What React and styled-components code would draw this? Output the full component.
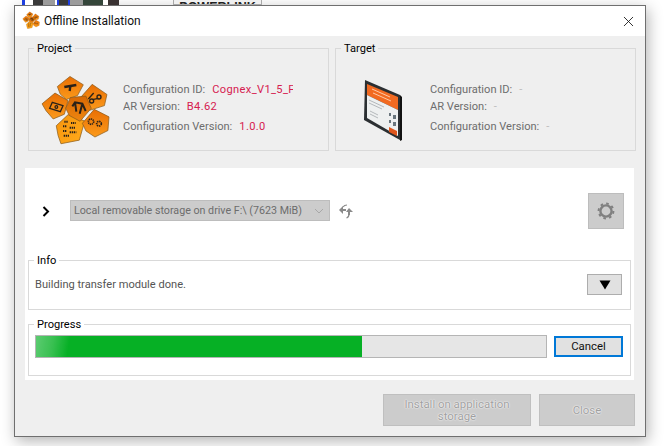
import React from 'react';
import styled, { createGlobalStyle } from 'styled-components';
import { X } from 'lucide-react';

const GlobalStyle = createGlobalStyle`
  html, body { margin: 0; padding: 0; background: #fff; }
  body { font-family: Roboto, "Open Sans", "Liberation Sans", sans-serif; font-size: 11.1px; color: #000; }
`;

const Desktop = styled.div`
  position: relative;
  width: 664px;
  height: 446px;
  overflow: hidden;
  background: #fff;
`;

const BehindStrip = styled.div`
  display: flex;
  height: 5px;
  padding-left: 22px;
  align-items: flex-start;
`;

const BehindTools = styled.div`
  width: 97px;
  height: 5px;
  margin-right: 54px;
  background: linear-gradient(90deg,
    #1f3fe0 0 3px, #fff 3px 11px, #3a3a3a 11px 21px, #9c9c9c 21px 33px, #fff 33px 35px,
    #1f3fe0 35px 37px, #3a3a3a 37px 46px, #1f3fe0 46px 48px, #9c9c9c 48px 61px,
    #34463a 61px 81px, #fff 81px 86px, #3a3232 86px 97px);
`;

const BehindButton = styled.div`
  box-sizing: border-box;
  width: 89px;
  height: 5px;
  border: 1px solid #a9a9a9;
  border-top: 0;
  overflow: hidden;
  background: #f0f0f0;
  color: #222;
  font: bold 12.5px/15px "Liberation Sans", sans-serif;
  text-align: center;
`;

const Window = styled.div`
  width: 630px;
  height: 430px;
  margin-left: 14px;
  border: 1px solid #6f6f6f;
  background: #efefef;
  box-shadow: 2px 4px 14px rgba(0, 0, 0, 0.3);
  display: flex;
  flex-direction: column;
`;

const TitleBar = styled.div`
  height: 30px;
  flex: none;
  display: flex;
  align-items: center;
  padding: 0 8px 0 6px;
  background: #fff;
`;

const TitleIcon = styled.div`
  display: flex;
  margin-bottom: 4px;
`;

const TitleText = styled.span`
  margin-left: 3px;
  flex: 1;
  font-size: 12px;
  color: #111;
`;

const GroupRow = styled.div`
  display: flex;
  gap: 6px;
  padding: 12px 0 0 13px;
`;

const GroupBox = styled.div`
  position: relative;
  box-sizing: border-box;
  border: 1px solid #d9d9d9;
  width: ${p => p.$width}px;
  height: ${p => p.$height}px;
`;

const Legend = styled.span`
  position: absolute;
  top: -8px;
  left: 5px;
  padding: 0 3px;
  line-height: 15px;
  background: ${p => p.$bg};
`;

const SummaryBody = styled.div`
  display: flex;
  height: 100%;
  align-items: flex-start;
  padding: 16px 0 0 ${p => p.$imagePad}px;
  box-sizing: border-box;
`;

const ImageSlot = styled.div`
  width: ${p => p.$width}px;
  flex: none;
  padding-top: ${p => p.$top || 0}px;
`;

const InfoGrid = styled.div`
  display: flex;
  flex-direction: column;
  width: 170px;
  padding-top: 16px;
  color: #6d6d6d;
  line-height: 17px;
`;

const InfoLine = styled.div`
  white-space: nowrap;
  overflow: hidden;
  margin-top: ${p => p.$gap || 0}px;
`;

const InfoValue = styled.span`
  margin-left: 7px;
  letter-spacing: 0.35px;
  color: ${p => (p.$muted ? '#bdbdbd' : '#d6204f')};
`;

const WhitePanel = styled.div`
  width: 609px;
  height: 212px;
  margin: 17px 0 0 10px;
  box-sizing: border-box;
  padding-top: 25px;
  background: #fff;
`;

const StorageRow = styled.div`
  display: flex;
  align-items: center;
  height: 36px;
  padding-left: 17px;
`;

const Expander = styled.svg`
  width: 8px;
  height: 11px;
  flex: none;
  margin-right: 20px;
`;

const StorageSelect = styled.div`
  box-sizing: border-box;
  width: 260px;
  height: 21px;
  margin-bottom: 1px;
  display: flex;
  align-items: center;
  justify-content: space-between;
  padding: 0 5px 0 3px;
  border: 1px solid #bdbdbd;
  background: #cccccc;
  color: #6d6d6d;
  font-size: 10.7px;
  white-space: nowrap;
`;

const RefreshIcon = styled.svg`
  width: 16px;
  height: 15px;
  flex: none;
  margin-left: 8px;
`;

const GearButton = styled.div`
  box-sizing: border-box;
  width: 36px;
  height: 36px;
  margin-left: auto;
  margin-right: 10px;
  display: flex;
  align-items: center;
  justify-content: center;
  border: 1px solid #bdbdbd;
  background: #cccccc;
`;

const PanelGroups = styled.div`
  display: flex;
  flex-direction: column;
  gap: 14px;
  margin: 31px 0 0 3px;
`;

const InfoContent = styled.div`
  display: flex;
  align-items: center;
  justify-content: space-between;
  padding: 13px 8px 0 6px;
  color: #555;
`;

const ArrowButton = styled.div`
  box-sizing: border-box;
  width: 35px;
  height: 21px;
  display: flex;
  align-items: center;
  justify-content: center;
  border: 1px solid #adadad;
  background: #e1e1e1;
`;

const ProgressContent = styled.div`
  display: flex;
  align-items: flex-start;
  padding: 10px 7px 0 6px;
`;

const ProgressTrack = styled.div`
  box-sizing: border-box;
  width: 512px;
  height: 23px;
  border: 1px solid #b5b5b5;
  background: #e6e6e6;
`;

const ProgressFill = styled.div`
  height: 100%;
  background:
    linear-gradient(100deg, rgba(255, 255, 255, 0.35) 0, rgba(255, 255, 255, 0.2) 18px, rgba(255, 255, 255, 0) 34px),
    #06b025;
`;

const CancelButton = styled.div`
  box-sizing: border-box;
  width: 69px;
  height: 21px;
  margin: 1px 0 0 7px;
  padding-bottom: 2px;
  display: flex;
  align-items: center;
  justify-content: center;
  border: 2px solid #0078d7;
  background: #e1e1e1;
  color: #111;
  font-size: 11.4px;
`;

const Footer = styled.div`
  display: flex;
  justify-content: flex-end;
  gap: 8px;
  padding: 14px 10px 0 0;
`;

const DisabledButton = styled.div`
  box-sizing: border-box;
  width: ${p => p.$width}px;
  height: 32px;
  padding: 0 16px;
  display: flex;
  align-items: center;
  justify-content: center;
  text-align: center;
  border: 1px solid #bfbfbf;
  background: #cccccc;
  color: #a0a0a0;
  font-size: 11.4px;
  line-height: 12px;
  text-shadow: 0 0 2px #fff, 0 0 1px #fff;
`;

const Petal = styled.path`
  transform-box: fill-box;
  transform-origin: center;
  transform: scale(1.08);
  stroke: #8a5a1c;
  stroke-width: 2;
  stroke-linejoin: round;
`;

const petals = [
  { d: 'M70 65 105 37 142 60 126 90 95 101 78 86Z', fill: 'url(#hexA)' },
  { d: 'M142 95 172 61 213 89 206 120 165 133 150 115Z', fill: 'url(#hexA)' },
  { d: 'M24 117 60 87 96 108 86 146 55 159 35 136Z', fill: 'url(#hexA)' },
  { d: 'M67 183 100 152 146 170 131 223 80 233 72 210Z', fill: 'url(#hexC)' },
  { d: 'M145 175 178 136 219 157 216 195 180 213 155 196Z', fill: 'url(#hexA)' },
  { d: 'M95 130 108 100 151 96 166 130 135 166 105 150Z', fill: 'url(#hexB)' },
];

const HexLogo = ({ size }) => (
  <svg width={size} height={size} viewBox="0 0 240 240">
    <defs>
      <linearGradient id="hexA" x1="0" y1="0" x2="0" y2="1">
        <stop offset="0" stopColor="#e96f04" />
        <stop offset="1" stopColor="#fb9a1b" />
      </linearGradient>
      <linearGradient id="hexB" x1="0" y1="0" x2="0" y2="1">
        <stop offset="0" stopColor="#d86804" />
        <stop offset="1" stopColor="#ee8610" />
      </linearGradient>
      <linearGradient id="hexC" x1="0" y1="0" x2="1" y2="1">
        <stop offset="0" stopColor="#f7940c" />
        <stop offset="1" stopColor="#ffab1c" />
      </linearGradient>
    </defs>
    {petals.map((p, i) => (
      <Petal key={i} d={p.d} fill={p.fill} />
    ))}
    <g fill="none" stroke="#2a2118" strokeWidth="4">
      <path d="M88 66 124 60" strokeWidth="7" />
      <path d="M106 64 104 78" strokeWidth="7" />
      <path d="M52 112 84 122 76 140 44 130Z" />
      <circle cx="64" cy="126" r="4" />
      <path d="M160 102 176 84M172 104 190 100" />
      <circle cx="170" cy="108" r="6" />
      <circle cx="192" cy="96" r="6" />
      <path d="M112 124 120 112 142 116 152 138M120 112 124 140M142 116 134 146" strokeWidth="6" />
      <path d="M88 170h12M108 174h14M84 184h10M104 188h16M84 198h12M104 202h20M86 212h18" strokeWidth="6" strokeDasharray="4 2" />
      <circle cx="168" cy="170" r="8" strokeWidth="5" strokeDasharray="4 2" />
      <circle cx="192" cy="176" r="7" strokeWidth="5" strokeDasharray="4 2" />
    </g>
  </svg>
);

const CardImage = () => (
  <svg width="38" height="62" viewBox="0 0 38 62">
    <path d="M1 0 36 15V60L0 40Z" fill="#2b2f32" />
    <path d="M36 15 38 17V60L36 61Z" fill="#111" />
    <path d="M3 4 34 17 34 30 3 15Z" fill="#f26a21" />
    <path d="M3 15 34 30V56L3 38Z" fill="#eef0f0" />
    <path d="M5 20 20 27M5 23 18 29M6 31 14 35M6 34 14 38" stroke="#b4b8bb" strokeWidth="1" />
    <path d="M25 33h2v3h-2zM29 35h3v4h-3zM25 40h2v3h-2zM29 42h3v4h-3z" fill="#6a767e" />
    <path d="M25 47 33 51V56L25 52Z" fill="#e0561c" />
    <path d="M8 9 26 17M9 13 27 21" stroke="#ffc9a6" strokeWidth="1" />
  </svg>
);

const Summary = ({ image, imagePad, imageWidth, imageTop, id, version, config, muted }) => (
  <SummaryBody $imagePad={imagePad}>
    <ImageSlot $width={imageWidth} $top={imageTop}>{image}</ImageSlot>
    <InfoGrid>
      <InfoLine>Configuration ID:<InfoValue $muted={muted}>{id}</InfoValue></InfoLine>
      <InfoLine>AR Version:<InfoValue $muted={muted}>{version}</InfoValue></InfoLine>
      <InfoLine $gap={3}>Configuration Version:<InfoValue $muted={muted}>{config}</InfoValue></InfoLine>
    </InfoGrid>
  </SummaryBody>
);

const App = () => (
  <Desktop>
    <GlobalStyle />
    <BehindStrip>
      <BehindTools />
      <BehindButton>POWERLINK</BehindButton>
    </BehindStrip>
    <Window>
      <TitleBar>
        <TitleIcon><HexLogo size={20} /></TitleIcon>
        <TitleText>Offline Installation</TitleText>
        <X size={17} strokeWidth={1.2} color="#111" />
      </TitleBar>
      <GroupRow>
        <GroupBox $width={301} $height={103}>
          <Legend $bg="#efefef">Project</Legend>
          <Summary
            image={<HexLogo size={80} />}
            imagePad={6}
            imageWidth={88}
            id="Cognex_V1_5_F"
            version="B4.62"
            config="1.0.0"
          />
        </GroupBox>
        <GroupBox $width={301} $height={103}>
          <Legend $bg="#efefef">Target</Legend>
          <Summary image={<CardImage />} imagePad={28} imageWidth={66} imageTop={15} id="-" version="-" config="-" muted />
        </GroupBox>
      </GroupRow>
      <WhitePanel>
        <StorageRow>
          <Expander viewBox="0 0 8 11">
            <path d="M1.5 1 6 5.5 1.5 10" fill="none" stroke="#000" strokeWidth="2" />
          </Expander>
          <StorageSelect>
            <span>Local removable storage on drive F:\ (7623 MiB)</span>
            <svg width="10" height="6" viewBox="0 0 10 6">
              <path d="M1 1 5 5 9 1" fill="none" stroke="#a8a8a8" strokeWidth="1" />
            </svg>
          </StorageSelect>
          <RefreshIcon viewBox="0 0 16 15">
            <path d="M1 6 5 2V5H8V7H5V10Z" fill="#8a8a8a" />
            <path d="M5 3C6 1.5 7.5 1 9 1" fill="none" stroke="#8a8a8a" strokeWidth="1.2" />
            <path d="M15 8 11 4 8 8H10V11H12V8Z" fill="#8a8a8a" />
            <path d="M11 10C11 12 10 13.5 8.5 14" fill="none" stroke="#8a8a8a" strokeWidth="1.2" />
          </RefreshIcon>
          <GearButton>
            <svg width="18" height="18" viewBox="0 0 18 18">
              <circle cx="9" cy="9" r="5.6" fill="none" stroke="#808080" strokeWidth="2.4" />
              <circle cx="9" cy="9" r="7.4" fill="none" stroke="#808080" strokeWidth="2" strokeDasharray="2.6 3.2" />
            </svg>
          </GearButton>
        </StorageRow>
        <PanelGroups>
          <GroupBox $width={603} $height={50}>
            <Legend $bg="#fff">Info</Legend>
            <InfoContent>
              <span>Building transfer module done.</span>
              <ArrowButton>
                <svg width="12" height="10" viewBox="0 0 12 10">
                  <path d="M0.5 0.5H11.5L6 9.5Z" fill="#000" />
                </svg>
              </ArrowButton>
            </InfoContent>
          </GroupBox>
          <GroupBox $width={603} $height={52}>
            <Legend $bg="#fff">Progress</Legend>
            <ProgressContent>
              <ProgressTrack>
                <ProgressFill style={{ width: '64%' }} />
              </ProgressTrack>
              <CancelButton>Cancel</CancelButton>
            </ProgressContent>
          </GroupBox>
        </PanelGroups>
      </WhitePanel>
      <Footer>
        <DisabledButton $width={148}>Install on application storage</DisabledButton>
        <DisabledButton $width={96}>Close</DisabledButton>
      </Footer>
    </Window>
  </Desktop>
);

export default App;
